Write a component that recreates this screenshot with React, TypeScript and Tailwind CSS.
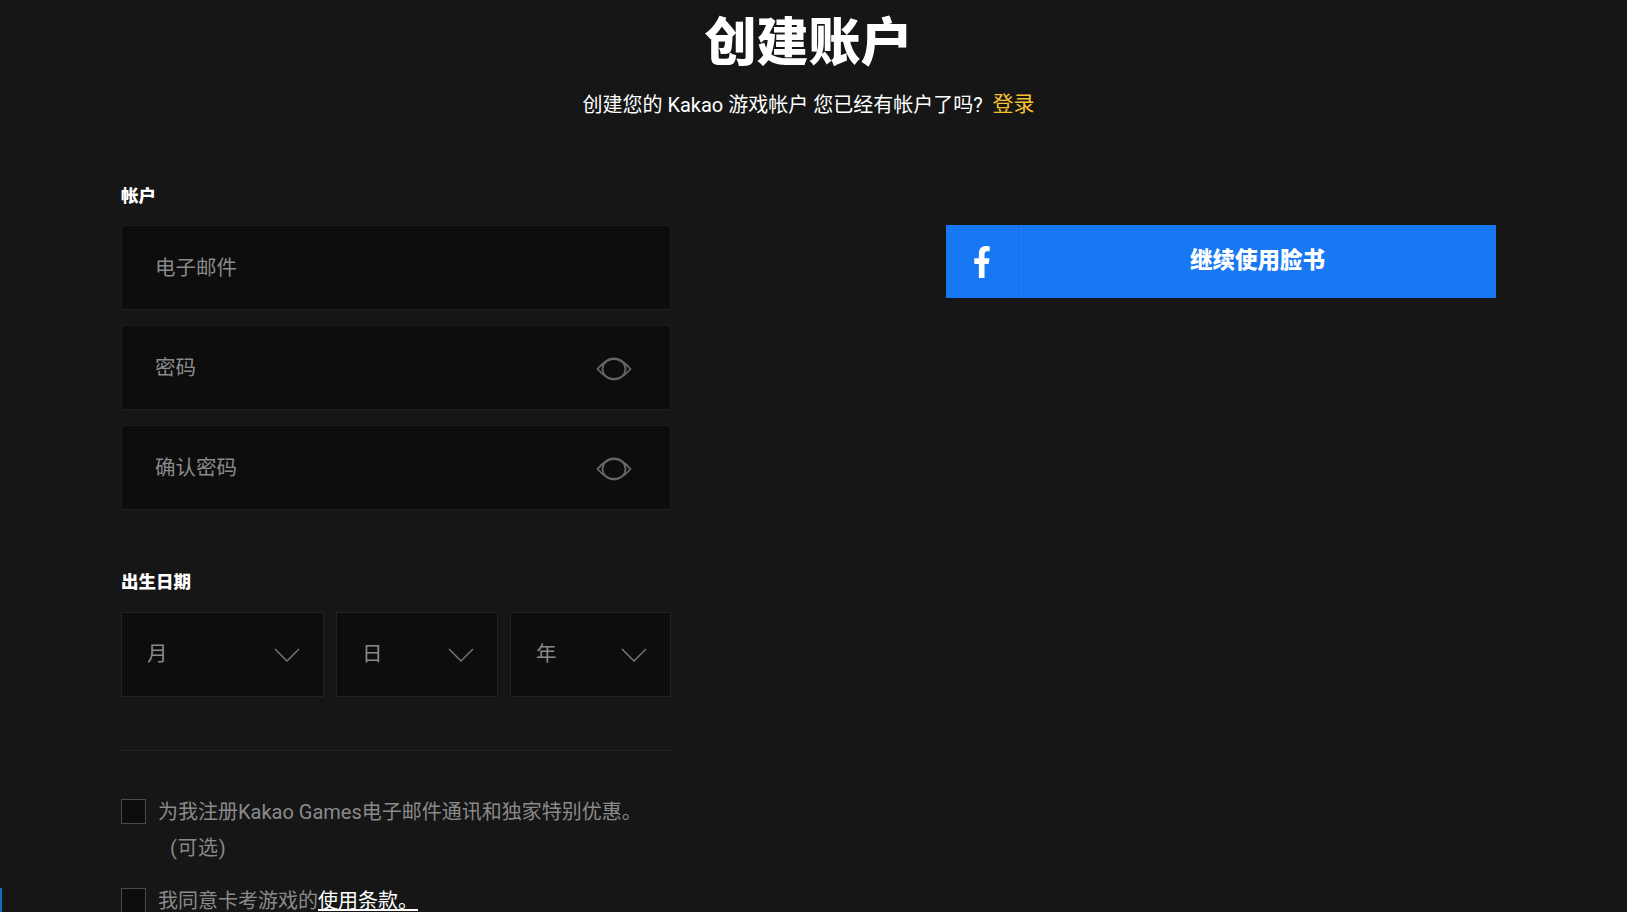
import React from "react";

const font = { fontFamily: '"Roboto", "Noto Sans CJK SC", sans-serif' };

function Eye() {
  return (
    <svg width="36" height="24" viewBox="0 0 36 24" fill="none" stroke="#666666" strokeWidth="1.8" className="relative top-[1px]">
      <path d="M1.5 12 C7 5.5 12 2 18 2 C24 2 29 5.5 34.5 12 C29 18.5 24 22 18 22 C12 22 7 18.5 1.5 12 Z" />
      <ellipse cx="18" cy="12" rx="11.5" ry="10.5" />
    </svg>
  );
}

function Chevron() {
  return (
    <svg width="26" height="14" viewBox="0 0 26 14" fill="none" stroke="#7a7a7a" strokeWidth="1.4">
      <path d="M1 1 L13 13 L25 1" />
    </svg>
  );
}

function Field({ label, eye }: { label: string; eye?: boolean }) {
  return (
    <div className="flex h-[85px] w-[550px] items-center justify-between border border-[#1c1c1c] bg-[#0d0d0d] pl-[33px] pr-[38px]">
      <span className="relative top-[1px] text-[20.5px] text-[#8a8a8a]">{label}</span>
      {eye && <Eye />}
    </div>
  );
}

function Select({ label, width }: { label: string; width: string }) {
  return (
    <div className={`flex h-[85px] ${width} items-center justify-between border border-[#222222] bg-[#0d0d0d] pl-[25px] pr-[23px]`}>
      <span className="text-[20.5px] text-[#8a8a8a]">{label}</span>
      <Chevron />
    </div>
  );
}

export default function App() {
  return (
    <div className="relative h-[912px] w-full overflow-hidden bg-[#161616]" style={font}>
      <div className="ml-[121px] w-[1375px]">
        <h1 className="pt-[14px] text-center text-[52px] font-black leading-[60px] text-white">创建账户</h1>
        <p className="mt-[16px] text-center text-[20px] leading-[30px] text-white">
          创建您的 Kakao 游戏帐户 您已经有帐户了吗? <span className="relative top-[-1px] ml-[5px] text-[21px] text-[#f5c02e]">登录</span>
        </p>
        <div className="mt-[63px] flex justify-between">
          <div className="w-[550px]">
            <div className="text-[17.5px] font-black leading-[26px] text-white">帐户</div>
            <div className="mt-[16px] flex flex-col gap-[15px]">
              <Field label="电子邮件" />
              <Field label="密码" eye />
              <Field label="确认密码" eye />
            </div>
            <div className="mt-[59px] text-[17.5px] font-black leading-[26px] text-white">出生日期</div>
            <div className="mt-[17px] flex justify-between">
              <Select label="月" width="w-[203px]" />
              <Select label="日" width="w-[162px]" />
              <Select label="年" width="w-[161px]" />
            </div>
            <div className="ml-[-1px] mt-[53px] h-px w-[552px] bg-[#232323]" />
            <div className="mt-[48px] flex gap-[12px]">
              <div className="h-[25px] w-[25px] shrink-0 border border-[#4a4a4a] bg-[#0d0d0d]" />
              <div className="text-[20px] leading-[36px] text-[#8a8a8a]">
                <div className="mt-[-5px]">为我注册Kakao Games电子邮件通讯和独家特别优惠。</div>
                <div className="pl-[12px] tracking-[0.6px]">(可选)</div>
              </div>
            </div>
            <div className="mt-[22px] flex gap-[12px]">
              <div className="h-[25px] w-[25px] shrink-0 border border-[#4a4a4a] bg-[#0d0d0d]" />
              <div className="text-[20px] leading-[26px] text-[#8a8a8a]">
                我同意卡考游戏的<span className="text-white underline">使用条款。</span>
              </div>
            </div>
          </div>
          <div className="mt-[42px] flex h-[73px] w-[550px] bg-[#1877f2]">
            <div className="flex h-full w-[73px] items-center justify-center border-r border-[#1a6fe0]">
              <svg width="18" height="32" viewBox="0 0 320 512" fill="#ffffff" preserveAspectRatio="none">
                <path d="M279.14 288l14.22-92.66h-88.91v-60.13c0-25.35 12.42-50.06 52.24-50.06h40.42V6.26S260.43 0 225.36 0c-73.22 0-121.08 44.38-121.08 124.72v70.62H22.89V288h81.39v224h100.17V288z" />
              </svg>
            </div>
            <div className="relative top-[-1px] flex flex-1 items-center justify-center text-[22.5px] font-black text-white">继续使用脸书</div>
          </div>
        </div>
      </div>
      <div className="absolute bottom-0 left-0 h-[24px] w-[2px] bg-[#1668c4]" />
    </div>
  );
}
